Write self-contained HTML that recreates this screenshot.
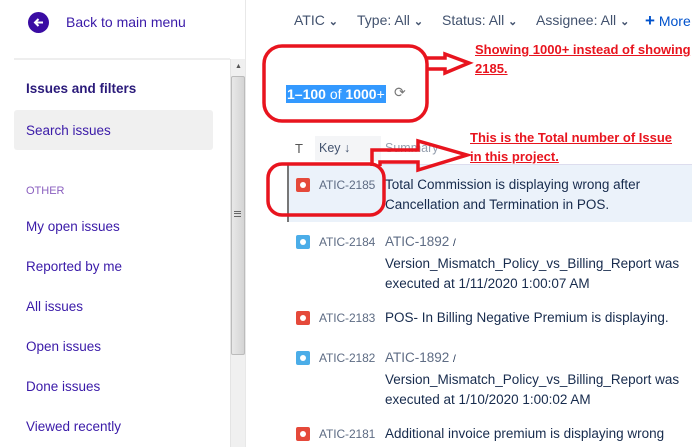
<!DOCTYPE html>
<html><head><meta charset="utf-8"><style>
*{margin:0;padding:0;box-sizing:border-box}
body{width:692px;height:447px;overflow:hidden;background:#fff;font-family:"Liberation Sans",sans-serif;position:relative;color:#172b4d}
.a{position:absolute;white-space:nowrap}
.nav{color:#3a1aa8;font-size:13.5px}
.f{color:#42526e;font-size:14px}
.key{color:#5e6c84;font-size:12px;letter-spacing:-0.1px}
.sum{color:#172b4d;font-size:13.5px;line-height:20px}
.ic{position:absolute;width:14px;height:14px;border-radius:2px}
.bug{background:#e5493a}.bug:after{content:"";position:absolute;left:4px;top:4px;width:6px;height:6px;border-radius:50%;background:#fff}
.sub{background:#4bade8}.sub:after{content:"";position:absolute;left:4px;top:4px;width:6px;height:6px;border-radius:50%;background:#fff}
.red{color:#e8141e;font-weight:bold;font-size:13px;text-decoration:underline;line-height:19px}
.chev{font-weight:bold;font-size:11px}
</style></head><body>
<div class="a" style="left:28px;top:12px;width:21px;height:21px;border-radius:50%;background:#3a0ca3"></div>
<svg class="a" style="left:28px;top:12px" width="21" height="21"><path d="M15 10.5H7M10.5 7L7 10.5L10.5 14" stroke="#fff" stroke-width="2" fill="none"/></svg>
<div class="a nav" style="left:66px;top:14px;font-size:14px">Back to main menu</div>
<div class="a" style="left:14px;top:58px;width:216px;height:2px;background:#eee"></div>
<div class="a nav" style="left:26px;top:81px;font-weight:bold;color:#2a1a7a">Issues and filters</div>
<div class="a" style="left:14px;top:110px;width:199px;height:40px;background:#f0f0f0;border-radius:3px"></div>
<div class="a nav" style="left:26px;top:123px">Search issues</div>
<div class="a" style="left:26px;top:185px;font-size:11px;color:#8a5fbf">OTHER</div>
<div class="a nav" style="left:26px;top:219px">My open issues</div>
<div class="a nav" style="left:26px;top:259px">Reported by me</div>
<div class="a nav" style="left:26px;top:299px">All issues</div>
<div class="a nav" style="left:26px;top:339px">Open issues</div>
<div class="a nav" style="left:26px;top:379px">Done issues</div>
<div class="a nav" style="left:26px;top:419px">Viewed recently</div>
<div class="a" style="left:230px;top:59px;width:16px;height:388px;background:#f0f0f0;border-left:1px solid #e4e4e4"></div>
<div class="a" style="left:235px;top:63px;font-size:7px;color:#555">▲</div>
<div class="a" style="left:231px;top:76px;width:14px;height:279px;background:linear-gradient(90deg,#e8e8e8,#d4d4d4);border:1px solid #bbb;border-radius:2px"></div>
<div class="a" style="left:234px;top:211px;width:7px;height:6px;border-top:1px solid #666;border-bottom:1px solid #666"></div>
<div class="a" style="left:234px;top:213px;width:7px;height:1px;background:#666"></div>
<div class="a" style="left:245px;top:0;width:1px;height:447px;background:#e8e8e8"></div>
<div class="a f" style="left:294px;top:12px">ATIC <span class="chev">⌄</span></div>
<div class="a f" style="left:357px;top:12px">Type: All <span class="chev">⌄</span></div>
<div class="a f" style="left:442px;top:12px">Status: All <span class="chev">⌄</span></div>
<div class="a f" style="left:536px;top:12px">Assignee: All <span class="chev">⌄</span></div>
<div class="a f" style="left:645px;top:11px;color:#0052cc"><b style="font-size:17px">+</b> More</div>
<div class="a" style="left:286px;top:85px;height:18px;background:#3399ff;color:#fff;font-size:14px;line-height:18px;padding:0 1px"><b>1–100</b> of <b>1000</b>+</div>
<div class="a" style="left:394px;top:84px;font-size:14px;color:#777">⟳</div>
<div class="a" style="left:295px;top:141px;font-size:13px;color:#555">T</div>
<div class="a" style="left:315px;top:136px;width:66px;height:25px;background:#f4f5f7"></div>
<div class="a" style="left:319px;top:141px;font-size:12.5px;color:#42526e">Key <b>↓</b></div>
<div class="a" style="left:385px;top:141px;font-size:12.5px;color:#97a0af">Summary</div>
<div class="a" style="left:287px;top:164px;width:405px;height:58px;background:#ebf2fa;border-left:2px solid #777;border-top:1px solid #dde"></div>
<div class="ic bug" style="left:296px;top:178px"></div>
<div class="a key" style="left:319px;top:178px">ATIC-2185</div>
<div class="a sum" style="left:385px;top:175px">Total Commission is displaying wrong after<br>Cancellation and Termination in POS.</div>
<div class="ic sub" style="left:296px;top:235px"></div>
<div class="a key" style="left:319px;top:235px">ATIC-2184</div>
<div class="a sum" style="left:385px;top:232px"><span style="color:#5e6c84">ATIC-1892</span> <span style="font-size:10px">/</span><br>Version_Mismatch_Policy_vs_Billing_Report was<br>executed at 1/11/2020 1:00:07 AM</div>
<div class="ic bug" style="left:296px;top:311px"></div>
<div class="a key" style="left:319px;top:311px">ATIC-2183</div>
<div class="a sum" style="left:385px;top:308px">POS- In Billing Negative Premium is displaying.</div>
<div class="ic sub" style="left:296px;top:351px"></div>
<div class="a key" style="left:319px;top:351px">ATIC-2182</div>
<div class="a sum" style="left:385px;top:348px"><span style="color:#5e6c84">ATIC-1892</span> <span style="font-size:10px">/</span><br>Version_Mismatch_Policy_vs_Billing_Report was<br>executed at 1/10/2020 1:00:02 AM</div>
<div class="ic bug" style="left:296px;top:427px"></div>
<div class="a key" style="left:319px;top:427px">ATIC-2181</div>
<div class="a sum" style="left:385px;top:424px">Additional invoice premium is displaying wrong</div>
<svg class="a" style="left:0;top:0" width="692" height="447">
<g fill="none" stroke="#e8141e" stroke-width="3.5">
<rect x="264" y="46" width="163" height="75" rx="18"/>
<rect x="268" y="164" width="116" height="51" rx="14"/>
<path d="M427 58H445V54L469 63L445 73V69H427"/>
<path d="M372 166V150H418V141L467 155L418 170V162H380V166"/>
</g>
</svg>
<div class="a red" style="left:475px;top:40px">Showing 1000+ instead of showing<br>2185.</div>
<div class="a red" style="left:470px;top:128px">This is the Total number of Issue<br>in this project.</div>
</body></html>
